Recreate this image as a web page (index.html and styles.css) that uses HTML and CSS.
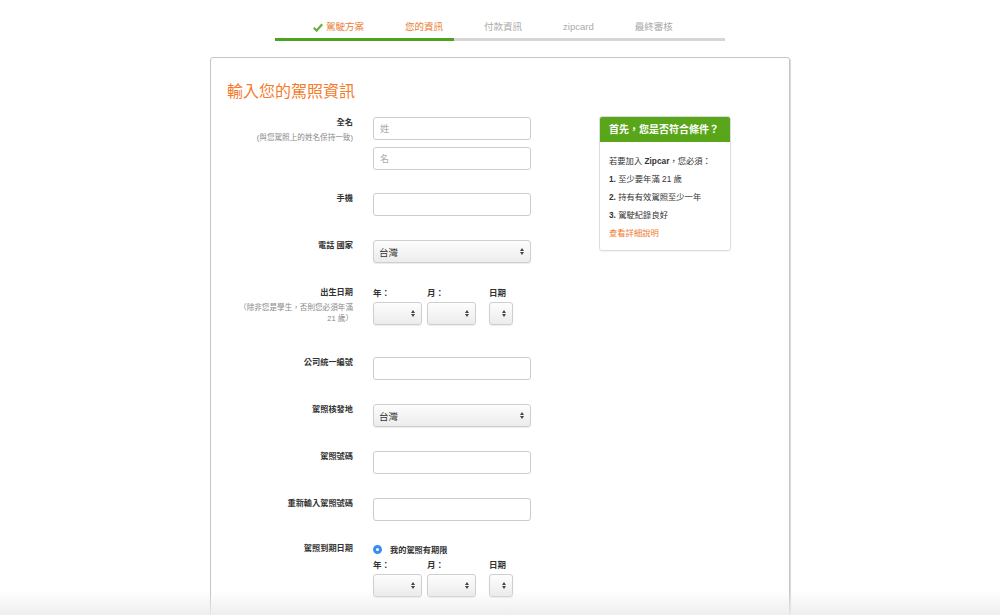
FILE: index.html
```html
<!DOCTYPE html>
<html lang="zh-Hant">

<head>
    <meta charset="UTF-8">
    <meta name="viewport" content="width=device-width, initial-scale=1.0">
    <title>輸入您的駕照資訊</title>
    <link rel="stylesheet" href="styles.css">
</head>

<body>
    <!-- Progress steps -->
    <div class="steps">
        <ol class="step-list">
            <li class="step done">
                <svg class="check" viewBox="0 0 10 9" width="10" height="9">
                    <path d="M0.8 4.8 L3.6 7.6 L9.2 1.2" fill="none" stroke="#6aae3a" stroke-width="2.2" />
                </svg>駕駛方案
            </li>
            <li class="step current">您的資訊</li>
            <li class="step">付款資訊</li>
            <li class="step">zipcard</li>
            <li class="step">最終審核</li>
        </ol>
        <div class="step-bar">
            <div class="step-fill" style="width: 39.8%;"></div>
        </div>
    </div>

    <div class="card">
        <h1 class="card-title">輸入您的駕照資訊</h1>

        <div class="card-body">
            <form class="form">
                <div class="row row-name">
                    <div class="label">
                        <b>全名</b>
                        <small>(與您駕照上的姓名保持一致)</small>
                    </div>
                    <div class="controls stack">
                        <input type="text" class="input" placeholder="姓">
                        <input type="text" class="input" placeholder="名">
                    </div>
                </div>

                <div class="row">
                    <div class="label"><b>手機</b></div>
                    <div class="controls"><input type="text" class="input"></div>
                </div>

                <div class="row">
                    <div class="label"><b>電話 國家</b></div>
                    <div class="controls">
                        <div class="select select-wide"><span>台灣</span><i class="arrows"></i></div>
                    </div>
                </div>

                <div class="row row-date">
                    <div class="label">
                        <b>出生日期</b>
                        <small>（除非您是學生，否則您必須年滿<br>21 歲）</small>
                    </div>
                    <div class="controls date">
                        <div class="date-col col-year">
                            <span class="date-label">年：</span>
                            <div class="select"><span></span><i class="arrows"></i></div>
                        </div>
                        <div class="date-col col-month">
                            <span class="date-label">月：</span>
                            <div class="select"><span></span><i class="arrows"></i></div>
                        </div>
                        <div class="date-col col-day">
                            <span class="date-label">日期</span>
                            <div class="select"><span></span><i class="arrows"></i></div>
                        </div>
                    </div>
                </div>

                <div class="row">
                    <div class="label"><b>公司統一編號</b></div>
                    <div class="controls"><input type="text" class="input"></div>
                </div>

                <div class="row">
                    <div class="label"><b>駕照核發地</b></div>
                    <div class="controls">
                        <div class="select select-wide"><span>台灣</span><i class="arrows"></i></div>
                    </div>
                </div>

                <div class="row">
                    <div class="label"><b>駕照號碼</b></div>
                    <div class="controls"><input type="text" class="input"></div>
                </div>

                <div class="row row-reenter">
                    <div class="label"><b>重新輸入駕照號碼</b></div>
                    <div class="controls"><input type="text" class="input"></div>
                </div>

                <div class="row">
                    <div class="label"><b>駕照到期日期</b></div>
                    <div class="controls">
                        <label class="radio"><span class="radio-dot"></span>我的駕照有期限</label>
                        <div class="date expiry">
                            <div class="date-col col-year">
                                <span class="date-label">年：</span>
                                <div class="select"><span></span><i class="arrows"></i></div>
                            </div>
                            <div class="date-col col-month">
                                <span class="date-label">月：</span>
                                <div class="select"><span></span><i class="arrows"></i></div>
                            </div>
                            <div class="date-col col-day">
                                <span class="date-label">日期</span>
                                <div class="select"><span></span><i class="arrows"></i></div>
                            </div>
                        </div>
                    </div>
                </div>
            </form>

            <!-- Eligibility box -->
            <aside class="aside">
                <h3 class="aside-head">首先，您是否符合條件？</h3>
                <div class="aside-body">
                    <p>若要加入 <b>Zipcar</b>，您必須：</p>
                    <p><b>1.</b> 至少要年滿 21 歲</p>
                    <p><b>2.</b> 持有有效駕照至少一年</p>
                    <p><b>3.</b> 駕駛紀錄良好</p>
                    <a href="#" class="aside-link">查看詳細說明</a>
                </div>
            </aside>
        </div>
    </div>

    <div class="bottom-fade"></div>
</body>

</html>
```

FILE: styles.css
```css
* {
    margin: 0;
    padding: 0;
    box-sizing: border-box;
}

html,
body {
    overflow: hidden;
}

body {
    font-family: "Liberation Sans", "Noto Sans CJK TC", sans-serif;
    background: #fff;
    color: #333;
    height: 615px;
}

/* Steps */
.steps {
    width: 450px;
    margin: 0 auto;
    padding-top: 21px;
}

.step-list {
    list-style: none;
    display: flex;
    gap: 41px;
    padding-left: 38px;
    height: 12px;
}

.step {
    font-size: 9.5px;
    line-height: 12px;
    color: #aaa;
    white-space: nowrap;
    display: flex;
    align-items: center;
}

.step.done,
.step.current {
    color: #ea7a2f;
}

.check {
    margin-right: 3px;
}

.step-bar {
    margin-top: 5px;
    height: 3px;
    background: #d6d6d6;
}

.step-fill {
    height: 100%;
    background: #4ba41f;
}

/* Card */
.card {
    width: 580px;
    margin: 16px auto 0;
    border: 1px solid #c4c4c4;
    border-radius: 3px;
    box-shadow: 1px 1px 1px rgba(0, 0, 0, 0.15);
    padding: 24px 16px 60px;
    min-height: 700px;
}

.card-title {
    font-size: 16px;
    line-height: 20px;
    font-weight: normal;
    color: #f47b2c;
    margin-bottom: 15px;
}

.card-body {
    display: flex;
    align-items: flex-start;
}

.form {
    width: 304px;
}

.row {
    display: grid;
    grid-template-columns: 126px 158px;
    column-gap: 20px;
    margin-bottom: 24px;
}

.row-name {
    margin-bottom: 23px;
}

.row-date {
    margin-bottom: 32px;
}

.row-reenter {
    margin-bottom: 22px;
}

.label {
    text-align: right;
}

.label b {
    display: block;
    font-size: 8.2px;
    line-height: 12px;
    color: #333;
}

.label small {
    display: block;
    margin-top: 3px;
    font-size: 7.6px;
    line-height: 11px;
    color: #888;
}

.stack {
    display: flex;
    flex-direction: column;
    gap: 7px;
}

.input {
    display: block;
    width: 158px;
    height: 23px;
    border: 1px solid #ccc;
    border-radius: 3px;
    padding: 0 6px;
    font-family: inherit;
    font-size: 9px;
    color: #333;
    background: #fff;
    outline: none;
}

.input::placeholder {
    color: #aaa;
}

/* Fake select */
.select {
    height: 23px;
    display: flex;
    align-items: center;
    justify-content: space-between;
    padding: 0 5px 0 5px;
    border: 1px solid #cfcfcf;
    border-radius: 3px;
    background: linear-gradient(#fdfdfd, #ececec);
    box-shadow: 0 1px 1px rgba(0, 0, 0, 0.08);
    font-size: 9.5px;
    color: #333;
}

.select-wide {
    width: 158px;
}

.arrows {
    display: flex;
    flex-direction: column;
    gap: 1px;
    width: 5px;
}

.arrows::before,
.arrows::after {
    content: "";
    width: 0;
    height: 0;
    border-left: 2.5px solid transparent;
    border-right: 2.5px solid transparent;
}

.arrows::before {
    border-bottom: 3px solid #444;
}

.arrows::after {
    border-top: 3px solid #444;
}

.date {
    display: flex;
    align-items: flex-start;
}

.date-col {
    display: flex;
    flex-direction: column;
    gap: 3px;
}

.col-year,
.col-month {
    width: 49px;
    margin-right: 5px;
}

.col-month {
    margin-right: 13px;
}

.col-day {
    width: 24px;
}

.date-label {
    font-size: 8.5px;
    line-height: 12px;
    font-weight: bold;
    color: #333;
    white-space: nowrap;
}

.radio {
    display: flex;
    align-items: center;
    height: 12px;
    font-size: 8.2px;
    font-weight: bold;
    color: #333;
}

.radio-dot {
    width: 9px;
    height: 9px;
    border-radius: 50%;
    background: #fff;
    border: 3px solid #3a8cf2;
    margin-right: 8px;
}

.expiry {
    margin-top: 4px;
}

/* Aside */
.aside {
    width: 132px;
    margin-left: 68px;
    margin-top: -1px;
    border: 1px solid #ddd;
    border-radius: 3px;
    box-shadow: 0 1px 1px rgba(0, 0, 0, 0.05);
    overflow: hidden;
}

.aside-head {
    height: 25px;
    line-height: 25px;
    padding: 0 9px;
    background: #5aa61a;
    color: #fff;
    font-size: 10px;
    font-weight: bold;
    white-space: nowrap;
}

.aside-body {
    padding: 10px 9px 8px;
}

.aside-body p,
.aside-link {
    display: block;
    font-size: 8.3px;
    line-height: 18px;
    color: #333;
    white-space: nowrap;
}

.aside-link {
    color: #f07a2f;
    text-decoration: none;
}

.bottom-fade {
    position: fixed;
    left: 0;
    right: 0;
    bottom: 0;
    height: 24px;
    background: linear-gradient(rgba(240, 240, 240, 0), rgba(236, 236, 236, 0.9));
    pointer-events: none;
}
```
